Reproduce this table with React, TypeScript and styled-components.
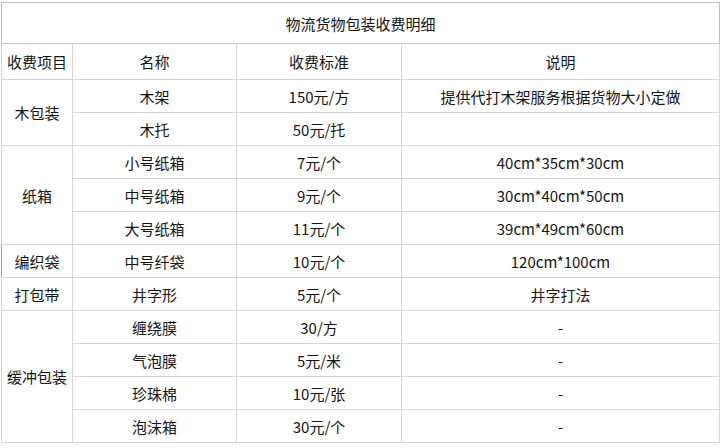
import React from 'react';
import styled, { createGlobalStyle, css } from 'styled-components';

const GlobalStyle = createGlobalStyle`
  html, body {
    margin: 0;
    padding: 0;
    background: #fff;
  }
  body {
    font-family: "Noto Sans CJK SC", "Noto Sans", sans-serif;
    color: #141414;
  }
`;

const Page = styled.div`
  padding: 2px 0 0 1px;
`;

const Table = styled.table`
  width: 718px;
  table-layout: fixed;
  border-collapse: collapse;
  border: 1px solid #b9bdc9;
  font-size: 15px;
`;

const TitleCell = styled.th`
  height: 40px;
  font-weight: normal;
  text-align: center;
  border-bottom: 1px solid #c3c7d2;
  padding: 0;
`;

const HeadCell = styled.th`
  height: 35px;
  font-weight: normal;
  text-align: center;
  border: 1px solid #d6d6d6;
  padding: 0;
`;

const Cell = styled.td<{ $accent?: boolean }>`
  height: 32px;
  text-align: center;
  vertical-align: middle;
  border: 1px solid #d6d6d6;
  padding: 0;
  white-space: nowrap;
  ${(p) =>
    p.$accent &&
    css`
      position: relative;
      &::before {
        content: '';
        position: absolute;
        left: -1px;
        top: 0;
        bottom: 0;
        width: 1px;
        background: #3fcf9a;
      }
    `}
`;

type Item = { name: string; price: string; note: string };
type Group = { title: string; items: Item[]; accent?: boolean };

const groups: Group[] = [
  {
    title: '木包装',
    items: [
      { name: '木架', price: '150元/方', note: '提供代打木架服务根据货物大小定做' },
      { name: '木托', price: '50元/托', note: '' },
    ],
  },
  {
    title: '纸箱',
    items: [
      { name: '小号纸箱', price: '7元/个', note: '40cm*35cm*30cm' },
      { name: '中号纸箱', price: '9元/个', note: '30cm*40cm*50cm' },
      { name: '大号纸箱', price: '11元/个', note: '39cm*49cm*60cm' },
    ],
  },
  {
    title: '编织袋',
    accent: true,
    items: [{ name: '中号纤袋', price: '10元/个', note: '120cm*100cm' }],
  },
  {
    title: '打包带',
    items: [{ name: '井字形', price: '5元/个', note: '井字打法' }],
  },
  {
    title: '缓冲包装',
    items: [
      { name: '缠绕膜', price: '30/方', note: '-' },
      { name: '气泡膜', price: '5元/米', note: '-' },
      { name: '珍珠棉', price: '10元/张', note: '-' },
      { name: '泡沫箱', price: '30元/个', note: '-' },
    ],
  },
];

export default function App() {
  return (
    <Page>
      <GlobalStyle />
      <Table>
        <colgroup>
          <col style={{ width: 71 }} />
          <col style={{ width: 164 }} />
          <col style={{ width: 165 }} />
          <col style={{ width: 318 }} />
        </colgroup>
        <thead>
          <tr>
            <TitleCell colSpan={4}>物流货物包装收费明细</TitleCell>
          </tr>
          <tr>
            <HeadCell>收费项目</HeadCell>
            <HeadCell>名称</HeadCell>
            <HeadCell>收费标准</HeadCell>
            <HeadCell>说明</HeadCell>
          </tr>
        </thead>
        <tbody>
          {groups.map((g) =>
            g.items.map((it, i) => (
              <tr key={g.title + it.name}>
                {i === 0 && (
                  <Cell rowSpan={g.items.length} $accent={g.accent}>
                    {g.title}
                  </Cell>
                )}
                <Cell>{it.name}</Cell>
                <Cell>{it.price}</Cell>
                <Cell>{it.note}</Cell>
              </tr>
            ))
          )}
        </tbody>
      </Table>
    </Page>
  );
}
